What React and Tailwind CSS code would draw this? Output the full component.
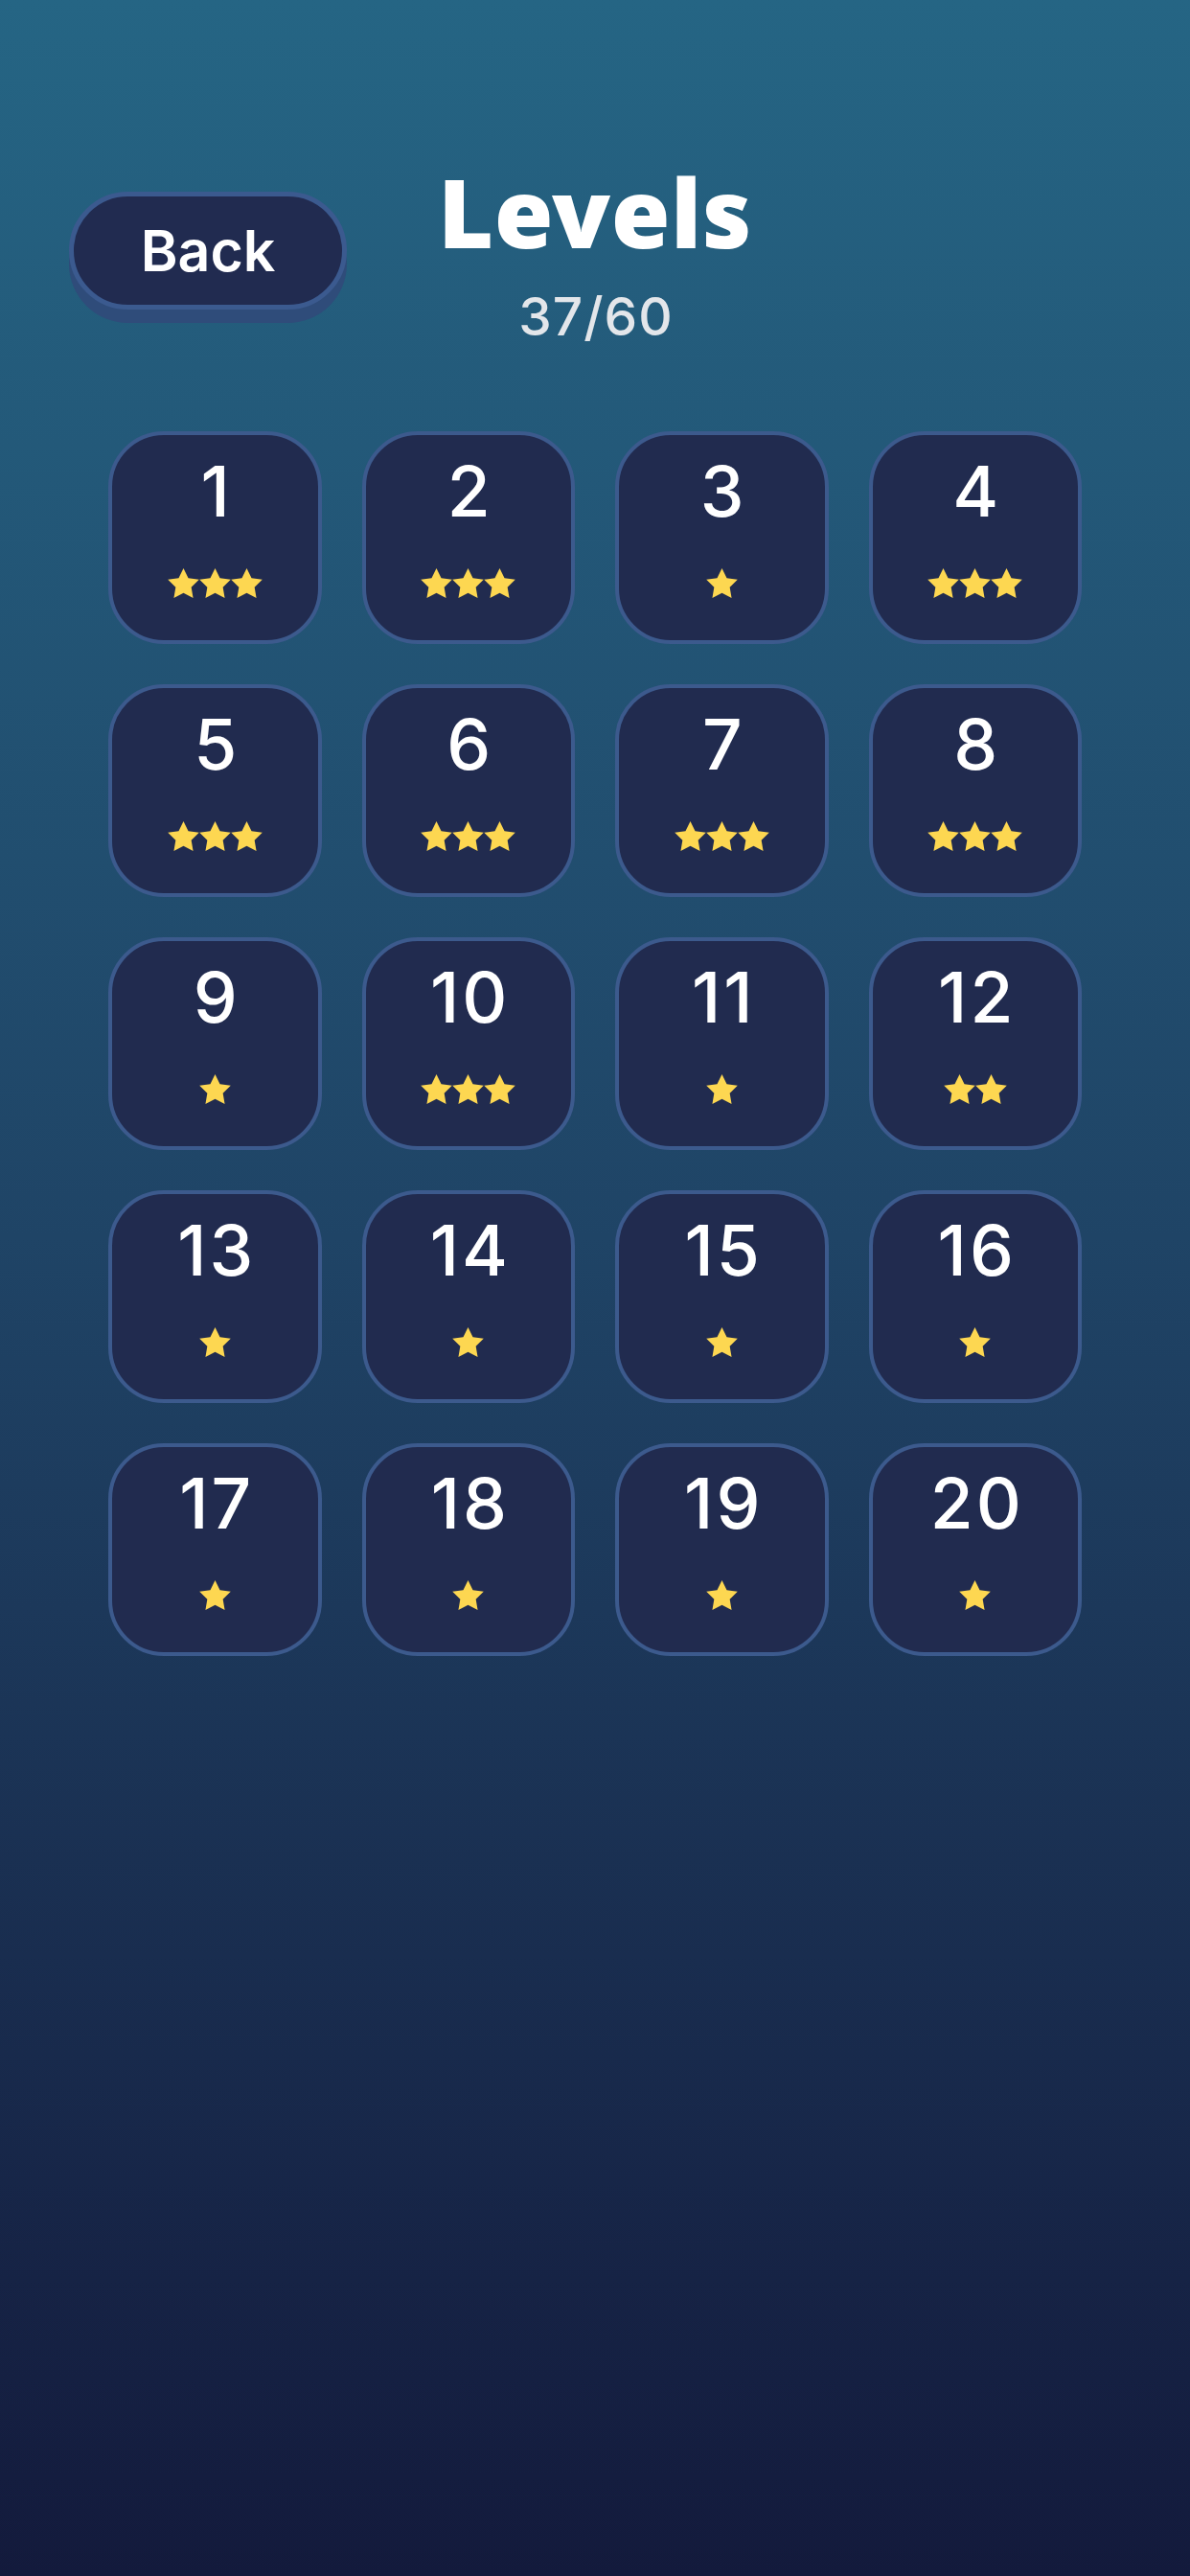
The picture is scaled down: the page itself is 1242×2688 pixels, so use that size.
import React from 'react';

const levels = [3, 3, 1, 3, 3, 3, 3, 3, 1, 3, 1, 2, 1, 1, 1, 1, 1, 1, 1, 1];

const inter = { fontFamily: 'Inter, "Noto Sans", sans-serif' };

function Star() {
  return (
    <svg viewBox="2 2 20 19.02" className="h-[31px] w-[33px]" fill="#fdd751">
      <path d="M12 2l3.09 6.26L22 9.27l-5 4.87 1.18 6.88L12 17.77l-6.18 3.25L7 14.14 2 9.27l6.91-1.01L12 2z" />
    </svg>
  );
}

function LevelTile({ n, stars }) {
  return (
    <button className="flex h-[222px] flex-col items-center rounded-[58px] border-4 border-[#3c5a8d] bg-[#212b4f] pt-[22px]">
      <span className="pl-[4px] text-[73px] font-medium leading-none tracking-[3px] text-white" style={inter}>
        {n}
      </span>
      <div className="mt-[44px] flex gap-0">
        {Array.from({ length: stars }).map((_, i) => (
          <Star key={i} />
        ))}
      </div>
    </button>
  );
}

export default function App() {
  return (
    <div
      className="h-[2688px] w-full bg-gradient-to-b from-[#256584] via-[#1f4466] via-48% to-[#131a3c]"
      style={{ fontFamily: '"Noto Sans", "Open Sans", sans-serif' }}
    >
      {/* Header */}
      <div className="grid grid-cols-[1fr_auto_1fr] items-start pt-[170px]">
        <div className="pl-[72px] pt-[30px]">
          <button className="flex h-[123px] w-[290px] items-center justify-center rounded-full border-[5px] border-[#3b5a8f] bg-[#212b50] shadow-[0_14px_0_#2f4c7a]">
            <span className="text-[59px] font-semibold leading-none text-white" style={inter}>
              Back
            </span>
          </button>
        </div>
        <div className="flex flex-col items-center">
          <h1 className="text-[100px] font-black leading-none tracking-[0.5px] text-white">Levels</h1>
          <div className="mt-[33px] pl-[2px] text-[55px] font-medium leading-none tracking-[1px] text-[#e3e6ea]" style={inter}>
            37/60
          </div>
        </div>
        <div />
      </div>

      {/* Level grid */}
      <div className="mx-auto mt-[92px] grid w-[1016px] grid-cols-4 gap-x-[42px] gap-y-[42px]">
        {levels.map((s, i) => (
          <LevelTile key={i} n={i + 1} stars={s} />
        ))}
      </div>
    </div>
  );
}
